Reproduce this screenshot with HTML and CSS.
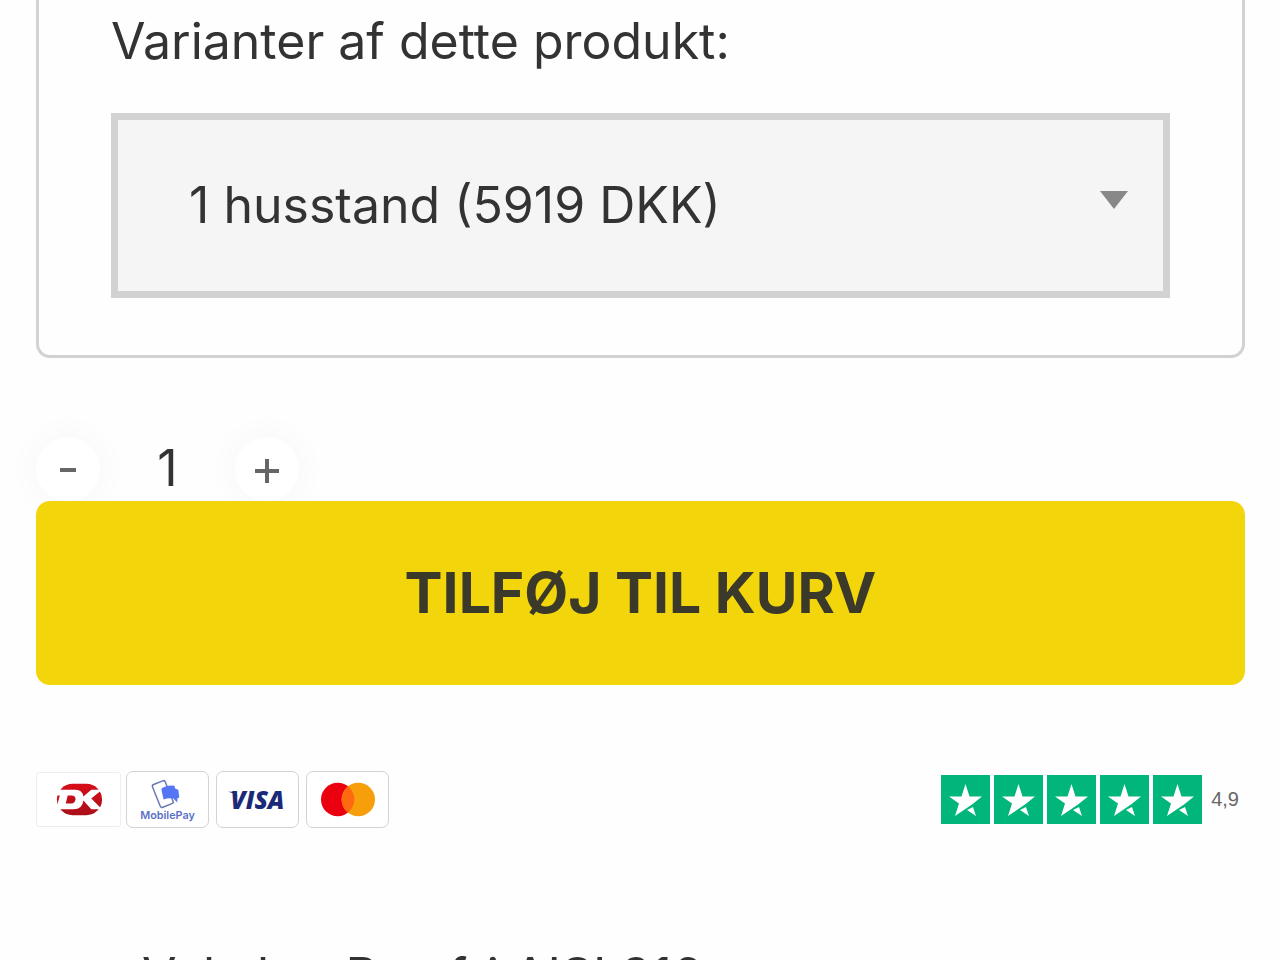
FILE: index.html
```html
<!DOCTYPE html>
<html lang="da">
<head>
    <meta charset="UTF-8">
    <meta name="viewport" content="width=device-width, initial-scale=1.0">
    <title>Veksler</title>
    <link rel="stylesheet" href="styles.css">
</head>
<body>
    <main class="product">
        <form class="product-form">
            <div class="variants">
                <label class="variants-label" for="variant">Varianter af dette produkt:</label>
                <div class="select-wrap">
                    <select class="variant-select" id="variant">
                        <option>1 husstand (5919 DKK)</option>
                    </select>
                    <svg class="select-arrow" viewBox="0 0 28 18" aria-hidden="true"><path d="M0 0h28L14 18z" fill="#888"/></svg>
                </div>
            </div>

            <div class="quantity">
                <button class="qty-btn" type="button" aria-label="Færre">
                    <svg viewBox="0 0 24 24" aria-hidden="true"><path d="M4 13h16" stroke="#666" stroke-width="4"/></svg>
                </button>
                <input class="qty-input" type="text" value="1" aria-label="Antal">
                <button class="qty-btn" type="button" aria-label="Flere">
                    <svg viewBox="0 0 24 24" aria-hidden="true"><path d="M0 14h24M12 2v24" stroke="#666" stroke-width="4"/></svg>
                </button>
            </div>

            <button class="add-to-cart" type="submit">TILFØJ TIL KURV</button>
        </form>

        <div class="trust">
            <ul class="payments">
                <li class="card card-dk">
                    <svg viewBox="0 0 84 54" role="img" aria-label="Dankort">
                        <defs>
                            <linearGradient id="dk-red" x1="0" y1="0" x2="0" y2="1">
                                <stop offset="0" stop-color="#d80d18"/>
                                <stop offset="1" stop-color="#a9101a"/>
                            </linearGradient>
                        </defs>
                        <rect x="20" y="11" width="46" height="32" rx="16" fill="url(#dk-red)"/>
                        <path d="M21 17h18q7 0 8 7l8-7h11l-11 9 11 11H55l-8-9q-1 9-10 9H19l4-14h-4zM31 23l-2 8h6q3 0 4-4 0-4-4-4z" fill="#fff" fill-rule="evenodd"/>
                    </svg>
                </li>
                <li class="card">
                    <svg viewBox="0 0 82 56" role="img" aria-label="MobilePay">
                        <rect x="29" y="10" width="14" height="25" rx="2" transform="rotate(-22 36 22)" fill="#fff" stroke="#6878b4" stroke-width="1.500"/>
                        <path d="M35 19q-1-2 1-3 6-3 12-2l1 3 3 1 1 8-2 1v4l-4-4q-5-1-10 1z" fill="#5575f5"/>
                        <text x="41" y="48" text-anchor="middle" class="mobilepay-name">MobilePay</text>
                    </svg>
                </li>
                <li class="card">
                    <svg viewBox="0 0 82 56" role="img" aria-label="Visa">
                        <text x="41" y="38" text-anchor="middle" class="visa-name">VISA</text>
                        <path d="M11 20h7l3 5q-4-4-10-5z" fill="#1a2a78"/>
                    </svg>
                </li>
                <li class="card">
                    <svg viewBox="0 0 82 56" role="img" aria-label="Mastercard">
                        <circle cx="31" cy="28" r="17" fill="#eb0010"/>
                        <circle cx="52" cy="28" r="17" fill="#f79e0b"/>
                        <path d="M41.500 14.600a17 17 0 0 1 0 26.800a17 17 0 0 1 0-26.800z" fill="#ff6a10"/>
                    </svg>
                </li>
            </ul>

            <div class="rating">
                <svg class="stars" viewBox="0 0 261 49" role="img" aria-label="5 stjerner">
                    <defs>
                        <g id="star">
                            <rect width="49" height="49" fill="#00b67a"/>
                            <path d="M24.500 9l4 12.500H41L31 29.500 14 41l4-12.500L8 21.500h12.500zM32 32l3 9-9-6z" fill="#fff"/>
                        </g>
                    </defs>
                    <use href="#star"/>
                    <use href="#star" x="53"/>
                    <use href="#star" x="106"/>
                    <use href="#star" x="159"/>
                    <use href="#star" x="212"/>
                </svg>
                <span class="score">4,9</span>
            </div>
        </div>

        <p class="usp">Veksler: Rustfri AISI 316</p>
    </main>
</body>
</html>
```

FILE: styles.css
```css
* {
    box-sizing: border-box;
}

body {
    margin: 0;
    background-color: #fefefe;
    color: #333;
    font-family: Inter, sans-serif;
    font-size: 50px;
    overflow: hidden;
}

.product {
    padding: 0 35px 0 36px;
}

.variants {
    padding: 11px 72px 57px;
    border: 3px solid #d2d2d2;
    border-top: 0;
    border-radius: 0 0 14px 14px;
}

.variants-label {
    display: block;
    margin-bottom: 42px;
    line-height: 60px;
}

.select-wrap {
    position: relative;
}

.variant-select {
    display: block;
    width: 100%;
    height: 185px;
    padding: 0 71px 2px;
    border: 7px solid #d2d2d2;
    border-radius: 0;
    background-color: #f5f5f5;
    color: inherit;
    font: inherit;
    appearance: none;
}

.select-arrow {
    position: absolute;
    top: 78px;
    right: 42px;
    width: 28px;
    height: 18px;
    pointer-events: none;
}

.quantity {
    display: flex;
    align-items: center;
    margin-top: 79px;
}

.qty-btn {
    display: flex;
    align-items: center;
    justify-content: center;
    width: 64px;
    height: 64px;
    padding: 0;
    border: 0;
    border-radius: 50%;
    background-color: #fff;
    box-shadow: 0 0 36px rgba(0, 0, 0, 0.04);
}

.qty-btn svg {
    width: 24px;
    height: 24px;
    overflow: visible;
}

.qty-input {
    width: 135px;
    height: 64px;
    padding: 0 0 2px;
    border: 0;
    background: none;
    color: inherit;
    font: inherit;
    text-align: center;
}

.add-to-cart {
    position: relative;
    display: block;
    width: 100%;
    height: 184px;
    padding: 0 0 2px;
    border: 0;
    border-radius: 14px;
    background-color: #f2d50a;
    color: #3b3929;
    font: inherit;
    font-size: 57px;
    font-weight: 700;
}

.trust {
    display: flex;
    align-items: center;
    justify-content: space-between;
    margin-top: 86px;
}

.payments {
    display: flex;
    align-items: center;
    gap: 7px;
    margin: 0;
    padding: 0;
    list-style: none;
}

.card {
    width: 83px;
    height: 57px;
    border: 1px solid #d2d2d8;
    border-radius: 7px;
    background-color: #fff;
}

.card-dk {
    width: 85px;
    height: 55px;
    margin-right: -2px;
    border-color: #eee;
    border-radius: 3px;
}

.card svg {
    display: block;
    width: 100%;
    height: 100%;
}

.mobilepay-name {
    fill: #5a70c8;
    font-size: 11px;
    font-weight: 600;
}

.visa-name {
    fill: #1a2a78;
    font-family: "Open Sans", sans-serif;
    font-size: 25px;
    font-style: italic;
    font-weight: 800;
}

.rating {
    display: flex;
    align-items: center;
    gap: 9px;
    padding-right: 6px;
}

.stars {
    width: 261px;
    height: 49px;
}

.score {
    color: #666;
    font-family: "Liberation Sans", sans-serif;
    font-size: 20px;
}

.usp {
    margin: 118px 0 0;
    padding-left: 106px;
    line-height: 60px;
    white-space: nowrap;
}
```
